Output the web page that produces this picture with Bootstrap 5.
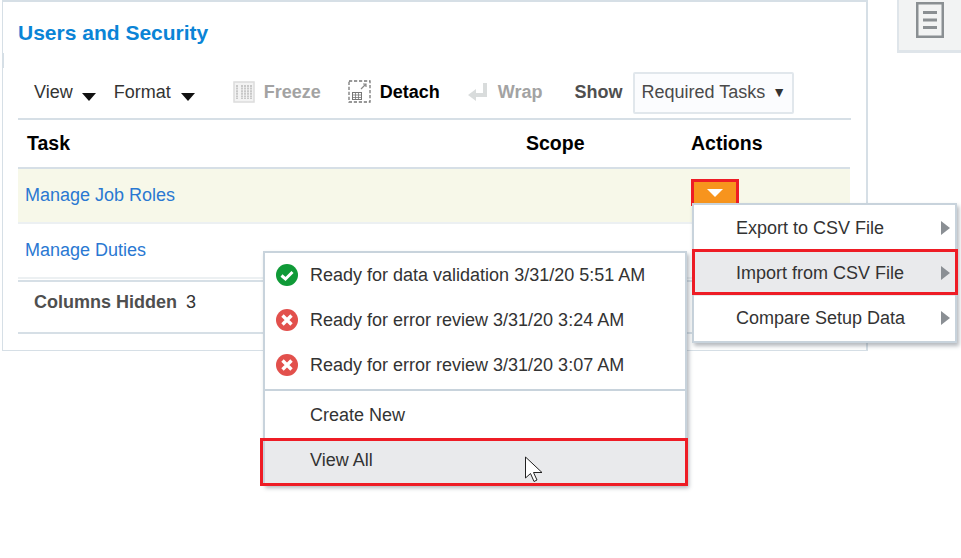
<!DOCTYPE html>
<html lang="en"><head><meta charset="utf-8"><title>Users and Security</title>
<link href="https://cdn.jsdelivr.net/npm/bootstrap@5.3.0/dist/css/bootstrap.min.css" rel="stylesheet">
<style>
html,body{height:100%;}
body{background:#fff;font-family:"Liberation Sans",Arial,sans-serif;font-size:18px;color:#333;overflow:hidden;position:relative;}
.stage{align-items:flex-start;}
.panel{position:relative;width:866px;height:351px;margin:0 0 0 2px;padding:16px 15px 0 15px;border:2px solid #d6dfe6;border-width:2px 2px 1.5px 1.5px;background:#fff;flex:none;}
.panel::before{content:"";position:absolute;left:-1px;top:51px;width:2px;height:15px;background:#d6dfe6;}
.ptitle{font-size:21px;font-weight:700;color:#0a84d6;line-height:24px;margin:3px 0 0 0;}
.tbar{height:56px;margin-top:19px;padding-left:16px;padding-top:1px;border-bottom:2px solid #d6dfe6;line-height:24px;white-space:nowrap;}
.tbar .ti{color:#333;}
.fmt{margin-left:18px;}
.arrow{display:inline-block;width:0;height:0;border:7px solid transparent;border-top:8px solid #111;border-bottom:0;margin-left:10px;vertical-align:-3px;}
.ar1{margin-left:9px;}
.off{color:#a3a3a3;font-weight:700;margin-left:9px;}
.on{color:#000;font-weight:700;margin-left:9px;}
.off2{margin-left:10px;}
.lbl{color:#4f4f4f;font-weight:700;margin-left:32px;}
.ifrz{margin-left:38px;}
.idet{margin-left:27px;}
.iwrp{margin-left:28px;}
.sel{height:42px;width:161px;margin-left:11px;margin-top:2px;padding-left:6px;padding-bottom:2px;border:2px solid #e1e7ec;border-radius:2px;background:#fbfcfe;color:#4a4a4a;}
.sel i{font-style:normal;font-size:14px;margin-left:7px;color:#333;}
.tb{table-layout:fixed;width:832px;margin:0;border-collapse:collapse;}
.c1{width:499px;}
.c2{width:165px;}
.tb th{height:48px;padding:0 9px;font-size:19.5px;color:#000;font-weight:700;border-bottom:2px solid #d6dfe6;background:#fff;vertical-align:middle;box-shadow:none;}
.tb td{padding:0 7px;border-bottom:2px solid #ecf0f2;vertical-align:middle;background:transparent;box-shadow:none;}
.tb tr.r1 td{height:55px;background:#f7f8e9;}
.tb tr.r2 td{height:55px;}
.tb a{color:#2a78d2;text-decoration:none;}
.chid{height:54px;margin-top:1px;padding-left:16px;border-top:2px solid #d6dfe6;border-bottom:2px solid #d6dfe6;padding-bottom:9px;color:#333;}
.chid b{color:#4f4f4f;margin-right:9px;}
.tabbox{width:64px;height:53px;margin-left:29px;background:#f2f3f3;border-left:2px solid #dfe5ea;border-bottom:3px solid #dfe5ea;flex:none;padding-top:2px;padding-left:17px;}
.actbtn{position:absolute;left:691px;top:179px;width:48px;height:27px;border:3px solid #ee1c25;background:#f7941d;}
.actbtn span{position:absolute;left:13px;top:7px;width:0;height:0;border:8px solid transparent;border-top:8px solid #fff;border-bottom:0;}
.menu{position:absolute;background:#fff;border:2px solid #c8d3dc;box-shadow:2px 3px 4px rgba(90,100,110,.45);color:#333;margin:0;padding:0;list-style:none;}
.m1{left:692px;top:203px;width:265px;height:140px;padding-top:1px;}
.m1 li{height:45px;padding-left:42px;position:relative;}
.tri{position:absolute;left:247px;top:15px;width:0;height:0;border:7px solid transparent;border-left:9px solid #8a8f94;border-right:0;}
.hl{background:#e9eaec;}
.redb{position:absolute;border:3px solid #ee1c25;pointer-events:none;}
.rb1{left:692px;top:249px;width:266px;height:46px;}
.rb2{left:260px;top:438px;width:428px;height:48px;}
.m2{left:263px;top:251px;width:424px;height:234px;}
.m2 li{padding-left:45px;position:relative;}
.m2 li.st{height:45px;}
.m2 svg.ic{position:absolute;left:11px;top:11px;}
.m2 .sep{height:2px;background:#c8d3dc;margin:1px 0 0;padding:0;}
.m2 li.mi1{height:48px;}
.m2 li.mi2{height:44px;padding-bottom:2px;}
.cursor{position:absolute;left:524px;top:456px;}
</style></head>
<body>
<div class="stage d-flex">
 <div class="panel">
  <h1 class="ptitle">Users and Security</h1>
  <div class="tbar d-flex align-items-center">
    <span class="ti">View<span class="arrow ar1"></span></span>
    <span class="ti fmt">Format<span class="arrow"></span></span>
    <svg class="ifrz" width="22" height="22" viewBox="0 0 22 22"><rect x="1" y="1" width="20" height="20" fill="#f3f3f3" stroke="#dcdcdc" stroke-width="1.5"/><path d="M4 4v14M9 4v14M12 4v14M15 4v14M18 4v14" stroke="#bdbdbd" stroke-width="1.6" stroke-dasharray="2 .6"/></svg>
    <span class="off">Freeze</span>
    <svg class="idet" width="23" height="23" viewBox="0 0 23 23" fill="none"><rect x="1" y="1" width="21" height="21" stroke="#777" stroke-width="1.3" stroke-dasharray="3.2 1.8"/><path d="M13 9l5-5M15 4h3v3" stroke="#888" stroke-width="1.2"/><rect x="4.500" y="12.500" width="9" height="7" stroke="#777"/><path d="M4.500 15h9M4.500 17.500h9M7.500 12.500v7M10.500 12.500v7" stroke="#777" stroke-width=".8"/></svg>
    <span class="on">Detach</span>
    <svg class="iwrp" width="20" height="20" viewBox="0 0 20 20"><path d="M19 1v14H8v4L0 13l8-6v4h7V1z" fill="#d9dcdc"/></svg>
    <span class="off off2">Wrap</span>
    <span class="lbl">Show</span>
    <div class="sel d-flex align-items-center">Required Tasks<i>▼</i></div>
  </div>
  <table class="table tb">
   <colgroup><col class="c1"><col class="c2"><col></colgroup>
   <thead><tr><th>Task</th><th>Scope</th><th>Actions</th></tr></thead>
   <tbody>
    <tr class="r1"><td><a href="#">Manage Job Roles</a></td><td></td><td></td></tr>
    <tr class="r2"><td><a href="#">Manage Duties</a></td><td></td><td></td></tr>
   </tbody>
  </table>
  <div class="chid d-flex align-items-center"><b>Columns Hidden</b>3</div>
 </div>
 <div class="tabbox"><svg class="d-block" width="28" height="36" viewBox="0 0 28 36" fill="none"><rect x="1.250" y="1.250" width="25.500" height="33.500" stroke="#8a8f92" stroke-width="2.500"/><path d="M7 10.500h14M7 18h14M7 25.500h14" stroke="#8a8f92" stroke-width="2.800"/></svg></div>
</div>

<div class="actbtn"><span></span></div>

<ul class="menu m1">
 <li class="d-flex align-items-center">Export to CSV File<span class="tri"></span></li>
 <li class="d-flex align-items-center hl">Import from CSV File<span class="tri"></span></li>
 <li class="d-flex align-items-center">Compare Setup Data<span class="tri"></span></li>
</ul>
<div class="redb rb1"></div>

<ul class="menu m2">
 <li class="st d-flex align-items-center"><svg class="ic" width="22" height="22" viewBox="0 0 22 22"><circle cx="11" cy="11" r="11" fill="#0f9a37"/><path d="M5.500 11.500l4 3.500 7-7" fill="none" stroke="#fff" stroke-width="3"/></svg>Ready for data validation 3/31/20 5:51 AM</li>
 <li class="st d-flex align-items-center"><svg class="ic" width="22" height="22" viewBox="0 0 22 22"><circle cx="11" cy="11" r="11" fill="#e2504c"/><path d="M6.500 6.500l9 9M15.500 6.500l-9 9" stroke="#fff" stroke-width="3.400"/></svg>Ready for error review 3/31/20 3:24 AM</li>
 <li class="st d-flex align-items-center"><svg class="ic" width="22" height="22" viewBox="0 0 22 22"><circle cx="11" cy="11" r="11" fill="#e2504c"/><path d="M6.500 6.500l9 9M15.500 6.500l-9 9" stroke="#fff" stroke-width="3.400"/></svg>Ready for error review 3/31/20 3:07 AM</li>
 <li class="sep"></li>
 <li class="mi1 d-flex align-items-center">Create New</li>
 <li class="mi2 d-flex align-items-center hl">View All</li>
</ul>
<div class="redb rb2"></div>
<svg class="cursor" width="20" height="28" viewBox="0 0 20 28"><path d="M1.500 1v21l5-4.500 3.500 8 3-1.500-3.500-7.500H18z" fill="#fff" stroke="#222" stroke-width="1"/></svg>
<script src="https://cdn.jsdelivr.net/npm/bootstrap@5.3.0/dist/js/bootstrap.bundle.min.js"></script>
</body></html>
